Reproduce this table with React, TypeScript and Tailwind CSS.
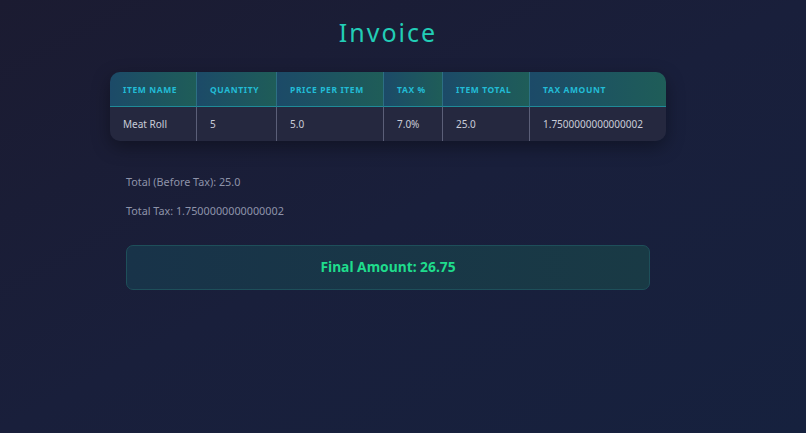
const columns = [
	{ label: 'Item Name', w: 'w-[86px]' },
	{ label: 'Quantity', w: 'w-[80px]' },
	{ label: 'Price Per Item', w: 'w-[107px]' },
	{ label: 'Tax %', w: 'w-[59px]' },
	{ label: 'Item Total', w: 'w-[87px]' },
	{ label: 'Tax Amount', w: 'w-[137px]' },
]

const row = ['Meat Roll', '5', '5.0', '7.0%', '25.0', '1.7500000000000002']

const App = () => {
	return (
		<div className="min-h-[433px] w-full bg-gradient-to-br from-[#1b1b31] via-[#191f3b] to-[#16213e] font-['Noto_Sans',sans-serif]">
			<div className="w-[776px] px-[110px] pt-[12px]">
				<h1 className="text-center text-[25px] leading-[40px] tracking-[2px] text-[#22cdb6]">Invoice</h1>

				<table className="mt-[20px] w-[556px] border-separate border-spacing-0 rounded-[10px] overflow-hidden shadow-[0_6px_18px_rgba(0,0,0,0.35)] table-fixed">
					<thead>
						<tr>
							{columns.map((c, i) => (
								<th
									key={c.label}
									className={`${c.w} h-[35px] pl-[13px] pt-[2px] text-left align-middle text-[8.5px] font-bold uppercase tracking-[0.6px] text-[#22bcd6] bg-gradient-to-r from-[#1c4a68] to-[#1f5d58] border-b border-[#1f8a98] ${i > 0 ? 'border-l border-l-[#2c6f84]' : ''}`}
								>
									{c.label}
								</th>
							))}
						</tr>
					</thead>
					<tbody>
						<tr>
							{row.map((v, i) => (
								<td
									key={i}
									className={`h-[34px] pl-[13px] text-left align-middle text-[10px] text-[#c9ccd8] bg-[#25283f] ${i > 0 ? 'border-l border-[#5b5f78]' : ''}`}
								>
									{v}
								</td>
							))}
						</tr>
					</tbody>
				</table>

				<div className="mt-[29px] px-[16px] text-[10.8px] text-[#8e93a9]">
					<p className="leading-[23px]">Total (Before Tax): 25.0</p>
					<p className="mt-[6px] leading-[23px]">Total Tax: 1.7500000000000002</p>
				</div>

				<div className="mx-[16px] mt-[23px] flex h-[45px] items-center justify-center rounded-[7px] border border-[#1e4f5a] bg-gradient-to-r from-[#183349] to-[#193a45]">
					<span className="text-[13.8px] font-bold text-[#1fdc8c]">Final Amount: 26.75</span>
				</div>
			</div>
		</div>
	)
}

export default App
